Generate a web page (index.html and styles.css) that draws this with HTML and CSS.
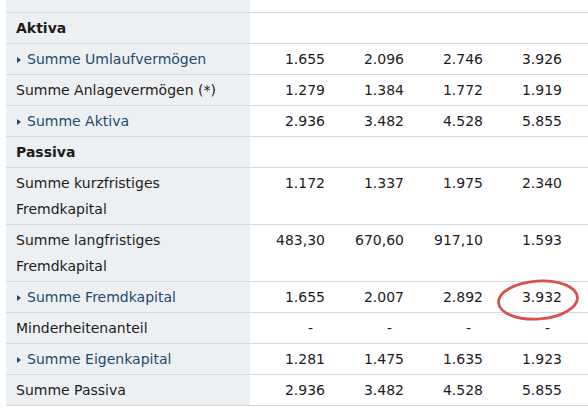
FILE: index.html
```html
<!DOCTYPE html>
<html lang="de">
<head>
<meta charset="utf-8">
<title>Bilanz</title>
<link rel="stylesheet" href="styles.css">
</head>
<body>
<table class="bilanz">
  <colgroup>
    <col class="c-label"><col class="c-num"><col class="c-num"><col class="c-num"><col class="c-num"><col class="c-rest">
  </colgroup>
  <tbody>
    <tr class="stub"><td class="label"></td><td></td><td></td><td></td><td></td><td></td></tr>
    <tr><td class="label head">Aktiva</td><td></td><td></td><td></td><td></td><td></td></tr>
    <tr><td class="label"><a class="more" href="#">Summe Umlaufvermögen</a></td><td>1.655</td><td>2.096</td><td>2.746</td><td>3.926</td><td></td></tr>
    <tr><td class="label">Summe Anlagevermögen (*)</td><td>1.279</td><td>1.384</td><td>1.772</td><td>1.919</td><td></td></tr>
    <tr><td class="label"><a class="more" href="#">Summe Aktiva</a></td><td>2.936</td><td>3.482</td><td>4.528</td><td>5.855</td><td></td></tr>
    <tr><td class="label head">Passiva</td><td></td><td></td><td></td><td></td><td></td></tr>
    <tr><td class="label">Summe kurzfristiges Fremdkapital</td><td>1.172</td><td>1.337</td><td>1.975</td><td>2.340</td><td></td></tr>
    <tr><td class="label">Summe langfristiges Fremdkapital</td><td>483,30</td><td>670,60</td><td>917,10</td><td>1.593</td><td></td></tr>
    <tr><td class="label"><a class="more" href="#">Summe Fremdkapital</a></td><td>1.655</td><td>2.007</td><td>2.892</td><td class="marked">3.932<svg class="circle" viewBox="0 0 84 44" width="84" height="44" aria-hidden="true"><ellipse cx="42" cy="22" rx="39.5" ry="19" fill="none" stroke="#d9504c" stroke-width="2.8" transform="rotate(-4 42 22)"/></svg></td><td></td></tr>
    <tr><td class="label">Minderheitenanteil</td><td class="dash">-</td><td class="dash">-</td><td class="dash">-</td><td class="dash">-</td><td></td></tr>
    <tr><td class="label"><a class="more" href="#">Summe Eigenkapital</a></td><td>1.281</td><td>1.475</td><td>1.635</td><td>1.923</td><td></td></tr>
    <tr><td class="label">Summe Passiva</td><td>2.936</td><td>3.482</td><td>4.528</td><td>5.855</td><td></td></tr>
  </tbody>
</table>
</body>
</html>
```

FILE: styles.css
```css
html, body {
  margin: 0;
  padding: 0;
  overflow: hidden;
  background: #ffffff;
}

.bilanz {
  margin-left: 6px;
  width: 610px;
  table-layout: fixed;
  border-collapse: separate;
  border-spacing: 0;
  font-family: "DejaVu Sans", Verdana, sans-serif;
  font-size: 14px;
  color: #1c1c1c;
}

.c-label { width: 244px; }
.c-num { width: 79px; }
.c-rest { width: 50px; }

.bilanz td {
  padding: 2px 4px 2px 0;
  line-height: 26px;
  border-bottom: 1px solid #d5d9dc;
  text-align: right;
  vertical-align: top;
  white-space: nowrap;
}

.bilanz td.label {
  background: #edf0f3;
  text-align: left;
  padding-left: 10px;
  padding-right: 10px;
  white-space: normal;
}

.bilanz tr.stub td {
  height: 12px;
  line-height: 12px;
  padding-top: 0;
  padding-bottom: 0;
}

.head {
  font-weight: bold;
}

.more {
  color: #1d4b6c;
  text-decoration: none;
}

.more::before {
  content: "";
  display: inline-block;
  width: 0;
  height: 0;
  border-left: 4px solid #1d4b6c;
  border-top: 3.5px solid transparent;
  border-bottom: 3.5px solid transparent;
  margin: 0 6px 1px 1px;
  vertical-align: middle;
}

.bilanz td.dash {
  padding-right: 16px;
}

.marked {
  position: relative;
}

.circle {
  position: absolute;
  left: 9px;
  top: -4px;
}
```
